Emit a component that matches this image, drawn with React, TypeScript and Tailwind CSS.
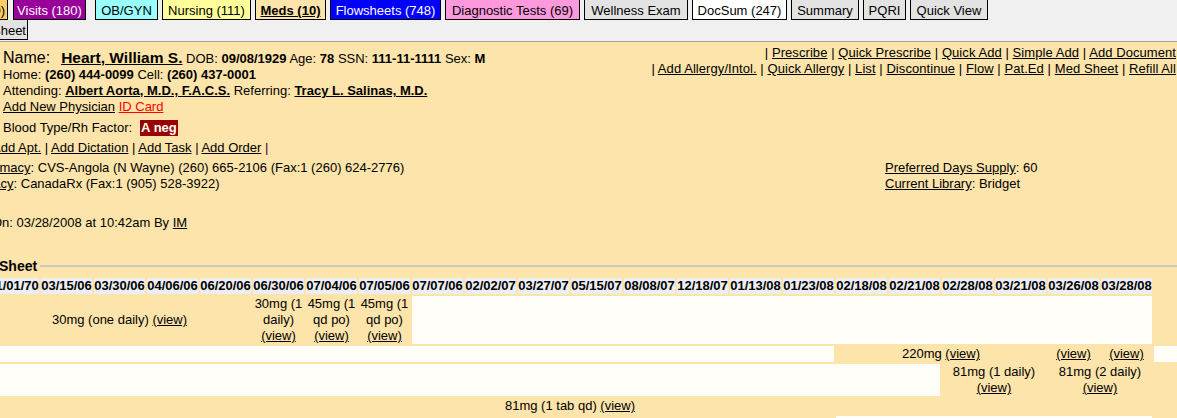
import React from "react";

type Tab = { label: string; cls: string };

const tabs: Tab[] = [
  { label: "Labs (20)", cls: "w-[60px] -ml-[52px] bg-[#ffcc66] text-right pr-[2px]" },
  { label: "Visits (180)", cls: "w-[73px] ml-[1px] bg-[#990099] text-white text-center" },
  { label: "OB/GYN", cls: "w-[63px] ml-[5px] bg-[#99ffff] text-center" },
  { label: "Nursing (111)", cls: "w-[89px] bg-[#ffff99] text-center" },
  { label: "Meds (10)", cls: "w-[71px] bg-[#fde4aa] font-bold underline text-center" },
  { label: "Flowsheets (748)", cls: "w-[111px] bg-[#0000ff] text-white text-center" },
  { label: "Diagnostic Tests (69)", cls: "w-[135px] bg-[#ff99dd] text-center" },
  { label: "Wellness Exam", cls: "w-[104px] bg-[#e3e3e3] text-center" },
  { label: "DocSum (247)", cls: "w-[95px] bg-white text-center" },
  { label: "Summary", cls: "w-[68px] bg-[#e3e3e3] text-center" },
  { label: "PQRI", cls: "w-[43px] bg-[#e3e3e3] text-center" },
  { label: "Quick View", cls: "w-[78px] bg-[#e3e3e3] text-center" },
];

const dates = [
  "01/01/70", "03/15/06", "03/30/06", "04/06/06", "06/20/06", "06/30/06", "07/04/06",
  "07/05/06", "07/07/06", "02/02/07", "03/27/07", "05/15/07", "08/08/07", "12/18/07",
  "01/13/08", "01/23/08", "02/18/08", "02/21/08", "02/28/08", "03/21/08", "03/26/08", "03/28/08",
];

const V = () => <u>(view)</u>;

const Sep = () => <span> | </span>;

export default function App() {
  return (
    <div className="w-[1177px] h-[418px] overflow-hidden bg-[#fde4aa] font-['Liberation_Sans',Arial,sans-serif] text-[13px] leading-[16px] text-black">
      {/* Tab bar */}
      <div className="h-[42px] bg-[#f0f0f0] border-b border-[#a0a0a0] overflow-hidden">
        <div className="flex gap-[4px] h-[20px]">
          {tabs.map((t) => (
            <div
              key={t.label}
              className={`shrink-0 h-[20px] border-x border-b border-black pt-[3px] whitespace-nowrap ${t.cls}`}
            >
              {t.label}
            </div>
          ))}
        </div>
        <div className="flex h-[20px]">
          <div className="shrink-0 -ml-[12px] w-[40px] h-[20px] bg-[#e3e3e3] border-r border-b border-black pt-[3px] pl-[4px] whitespace-nowrap">
            Sheet
          </div>
        </div>
      </div>

      {/* Patient header */}
      <div className="flex justify-between">
        <div className="pt-[6px] pl-[3px] whitespace-nowrap">
          <div className="h-[19px] leading-[19px]">
            <span className="text-[16px]">Name:</span>
            <u className="text-[15.5px] font-bold ml-[11px]">Heart, William S.</u>
            <span> DOB: <b>09/08/1929</b> Age: <b>78</b> SSN: <b>111-11-1111</b> Sex: <b>M</b></span>
          </div>
          <div className="h-[16px]">
            Home: <b>(260) 444-0099</b> Cell: <b>(260) 437-0001</b>
          </div>
          <div className="h-[16px]">
            Attending: <b><u>Albert Aorta, M.D., F.A.C.S.</u></b> Referring: <b><u>Tracy L. Salinas, M.D.</u></b>
          </div>
          <div className="h-[16px]">
            <u>Add New Physician</u> <u className="text-[#ff0000]">ID Card</u>
          </div>
          <div className="h-[16px] mt-[5px] flex">
            <span>Blood Type/Rh Factor:</span>
            <span className="ml-[8px] px-[1px] bg-[#990000] text-white font-bold">A neg</span>
          </div>
        </div>
        <div className="pt-[3px] pr-[1px] text-right whitespace-nowrap tracking-[0.07px]">
          <div className="h-[16px]">
            <Sep /><u>Prescribe</u><Sep /><u>Quick Prescribe</u><Sep /><u>Quick Add</u><Sep /><u>Simple Add</u><Sep /><u>Add Document</u>
          </div>
          <div className="h-[16px]">
            <Sep /><u>Add Allergy/Intol.</u><Sep /><u>Quick Allergy</u><Sep /><u>List</u><Sep /><u>Discontinue</u><Sep /><u>Flow</u><Sep /><u>Pat.Ed</u><Sep /><u>Med Sheet</u><Sep /><u>Refill All</u>
          </div>
        </div>
      </div>

      <div className="mt-[4px] -ml-[8px] h-[16px] whitespace-nowrap">
        <u>Add Apt.</u><Sep /><u>Add Dictation</u><Sep /><u>Add Task</u><Sep /><u>Add Order</u><span className="text-[#440044]"> |</span>
      </div>

      <div className="mt-[4px] flex whitespace-nowrap">
        <div className="flex-1">
          <div className="h-[16px] -ml-[28px]">
            <u>Pharmacy</u>: CVS-Angola (N Wayne) (260) 665-2106 (Fax:1 (260) 624-2776)
          </div>
          <div className="h-[16px] -ml-[45px]">
            <u>Pharmacy</u>: CanadaRx (Fax:1 (905) 528-3922)
          </div>
        </div>
        <div className="w-[292px] shrink-0">
          <div className="h-[16px]">
            <u>Preferred Days Supply</u>: 60
          </div>
          <div className="h-[16px]">
            <u>Current Library</u>: Bridget
          </div>
        </div>
      </div>

      <div className="mt-[23px] -ml-[8px] h-[16px] whitespace-nowrap">
        On: 03/28/2008 at 10:42am By <u>IM</u>
      </div>

      {/* Flow sheet */}
      <div className="mt-[26px] grid grid-cols-[auto_1fr] items-center h-[18px] -ml-[1px]">
        <span className="text-[14px] leading-[18px] font-bold whitespace-nowrap">Sheet</span>
        <div className="ml-[3px] h-[2px] bg-[#c9c6bc]" />
      </div>

      <div className="mt-[3px] -ml-[12px] grid grid-cols-[repeat(23,51px)] gap-[2px] text-center">
        {dates.map((d) => (
          <div key={d} className="h-[16px] bg-[#eceef2] font-bold whitespace-nowrap">
            {d}
          </div>
        ))}
        <div />

        {/* row 1 */}
        <div className="col-span-5 flex items-center justify-center whitespace-nowrap">
          <span>30mg (one daily) <V /></span>
        </div>
        <div>30mg (1 daily) <V /></div>
        <div>45mg (1 qd po) <V /></div>
        <div>45mg (1 qd po) <V /></div>
        <div className="col-span-14 bg-[#fffef8]" />
        <div />

        {/* row 2 */}
        <div className="col-span-16 h-[16px] bg-[#fffef8]" />
        <div className="col-span-4 whitespace-nowrap">220mg <V /></div>
        <div><V /></div>
        <div><V /></div>
        <div className="bg-[#fffef8]" />

        {/* row 3 */}
        <div className="col-span-18 bg-[#fffef8]" />
        <div className="col-span-2">81mg (1 daily) <V /></div>
        <div className="col-span-2">81mg (2 daily) <V /></div>
        <div />

        {/* row 4 */}
        <div className="col-span-22 h-[16px] whitespace-nowrap">81mg (1 tab qd) <V /></div>
        <div />

        {/* row 5 */}
        <div className="col-span-16 h-[16px]" />
        <div className="col-span-6 h-[16px] bg-[#fffef8]" />
        <div />
      </div>
    </div>
  );
}
